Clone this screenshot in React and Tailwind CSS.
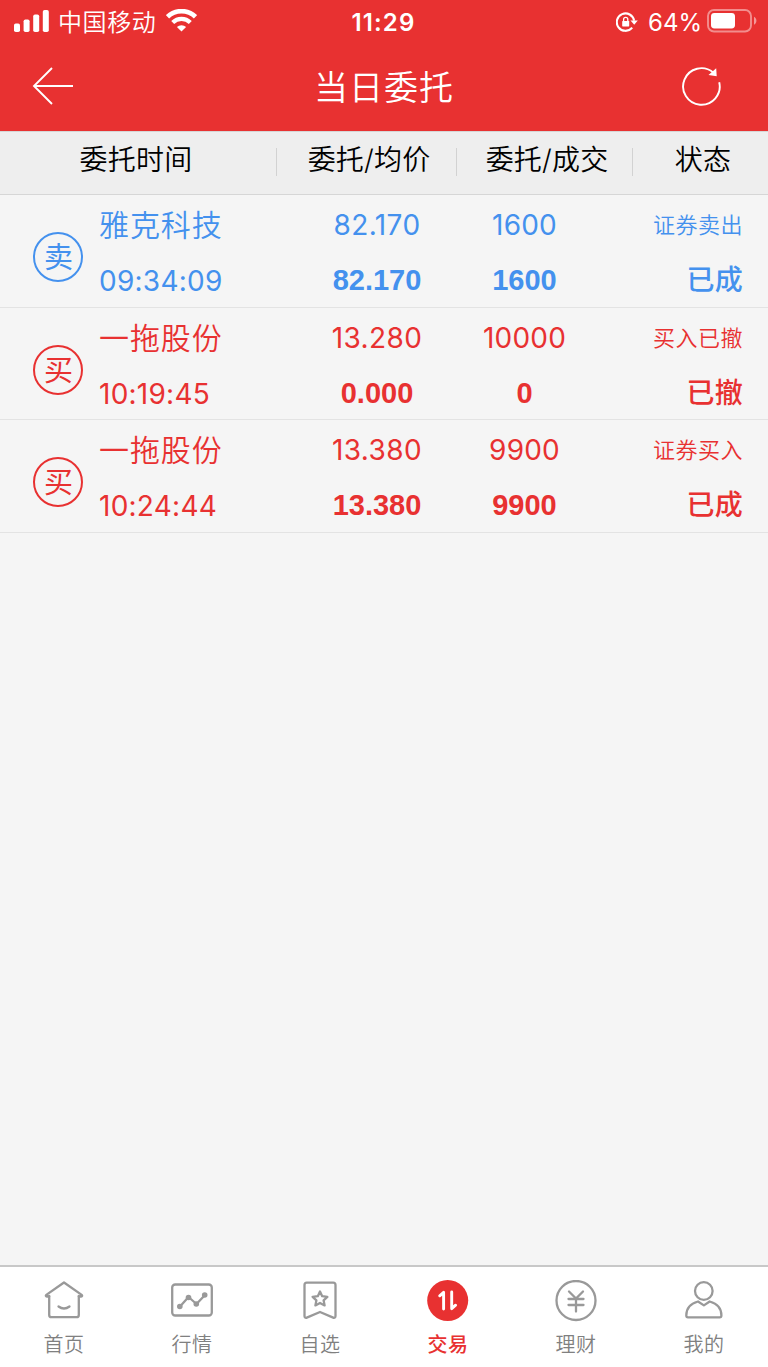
const orders = [
  { side: '卖', name: '雅克科技', time: '09:34:09', price: '82.170', avg: '82.170', qty: '1600', filled: '1600', type: '证券卖出', status: '已成', color: 'text-[#4491ee]', height: 'h-[113px]' },
  { side: '买', name: '一拖股份', time: '10:19:45', price: '13.280', avg: '0.000', qty: '10000', filled: '0', type: '买入已撤', status: '已撤', color: 'text-[#e83131]', height: 'h-[112px]' },
  { side: '买', name: '一拖股份', time: '10:24:44', price: '13.380', avg: '13.380', qty: '9900', filled: '9900', type: '证券买入', status: '已成', color: 'text-[#e83131]', height: 'h-[113px]' },
];

function StatusBar() {
  return (
    <div className="flex h-[43px] items-center justify-between pl-[14px] pr-[11px]">
      <div className="flex w-[240px] items-center">
        <svg width="35" height="22" viewBox="0 0 35 22" fill="#fff" className="-mt-[1px]">
          <rect x="0" y="13.5" width="6" height="8.5" rx="1.8" />
          <rect x="9.6" y="9.5" width="6" height="12.5" rx="1.8" />
          <rect x="19.2" y="4.5" width="6" height="17.5" rx="1.8" />
          <rect x="28.8" y="0" width="6" height="22" rx="1.8" />
        </svg>
        <span className="ml-[9px] mt-[2px] text-[24px] leading-[30px] font-[350] tracking-[0.6px]">中国移动</span>
        <svg width="31" height="23" viewBox="0 0 31 23" className="ml-[10px] -mt-[2px]" fill="none" stroke="#fff">
          <path d="M1.5 7.8a20 20 0 0 1 28 0" strokeWidth="4.6" />
          <path d="M6.7 13.5a12.5 12.5 0 0 1 17.6 0" strokeWidth="4.2" />
          <path d="M15.5 22.5l-4.6-4.4a6.5 6.5 0 0 1 9.2 0z" fill="#fff" stroke="none" />
        </svg>
      </div>
      <div className="-ml-[4px] mt-[2px] text-[24px] leading-[30px] font-semibold tracking-[1.1px]">11:29</div>
      <div className="flex w-[240px] items-center justify-end">
        <svg width="22" height="20" viewBox="0 0 22 20" fill="none" stroke="#fff">
          <path d="M16.2 15.7a8.7 8.7 0 1 1 1.9-7" strokeWidth="2.1" />
          <path d="M14.5 8.6h7.3l-3.6 4.2z" fill="#fff" stroke="none" />
          <rect x="6.2" y="9" width="7" height="5.4" rx="0.6" fill="#fff" stroke="none" />
          <path d="M7.6 9.4V7.4a2.1 2.1 0 0 1 4.2 0v2" strokeWidth="1.3" />
        </svg>
        <span className="ml-[10px] mt-[2px] text-[24px] leading-[30px]">64%</span>
        <svg width="50" height="24" viewBox="0 0 50 24" className="ml-[5px] -mt-[2px]">
          <rect x="1" y="1" width="43" height="21.5" rx="6" fill="none" stroke="#fff" strokeOpacity="0.45" strokeWidth="1.9" />
          <rect x="4" y="4" width="24" height="15.4" rx="3.4" fill="#fff" />
          <path d="M47 7.800c3.200 1.400 3.200 6.600 0 8z" fill="#fff" fillOpacity="0.5" />
        </svg>
      </div>
    </div>
  );
}

function TitleBar() {
  return (
    <div className="flex h-[88px] items-center justify-between pl-[32px] pr-[46px]">
      <svg width="42" height="38" viewBox="0 0 42 38" fill="none" stroke="#fff" strokeWidth="1.9" className="-mt-[2px]">
        <path d="M20 1L2 19l18 18M2 19h39" />
      </svg>
      <h1 className="ml-[14px] mt-[2px] text-[34px] leading-[44px] font-[350] tracking-[1px]">当日委托</h1>
      <svg width="42" height="42" viewBox="0 0 42 42" fill="none" stroke="#fff" className="-mt-[2px]">
        <path d="M39.200 17.200A18.300 18.300 0 1 1 33.200 7.500" strokeWidth="1.9" />
        <path d="M36.200 3.300l0.500 8-8.200-1.200z" fill="#fff" stroke="none" />
      </svg>
    </div>
  );
}

function HeaderCell({ className, last, children }) {
  return (
    <div className={`flex h-[28px] items-center justify-center ${last ? '' : 'border-r border-[#d2d2d2]'} ${className}`}>
      <span className="-mt-[4px] text-[28px] leading-[36px] font-[350] tracking-[0.2px] whitespace-nowrap">{children}</span>
    </div>
  );
}

function OrderRow({ o }) {
  return (
    <div className={`flex border-b border-[#e3e3e3] ${o.height} ${o.color}`}>
      <div className="flex w-[295px] pl-[33px]">
        <div className="mt-[37px] flex size-[50px] shrink-0 items-center justify-center rounded-full border-2 border-current text-[29px] leading-[30px]">
          <span className="mt-[1px] ml-[1px]">{o.side}</span>
        </div>
        <div className="ml-[16px] flex flex-col">
          <span className="mt-[10px] text-[30px] leading-[40px] font-[350] tracking-[0.9px]">{o.name}</span>
          <span className="mt-[16px] text-[28px] leading-[40px] tracking-[0.25px]">{o.time}</span>
        </div>
      </div>
      <div className="flex w-[164px] flex-col items-center">
        <span className="mt-[10px] text-[28px] leading-[40px] tracking-[0.4px]">{o.price}</span>
        <span className="mt-[15px] font-['Liberation_Sans'] text-[29px] leading-[40px] font-bold">{o.avg}</span>
      </div>
      <div className="flex w-[131px] flex-col items-center">
        <span className="mt-[10px] text-[28px] leading-[40px] tracking-[0.2px]">{o.qty}</span>
        <span className="mt-[15px] font-['Liberation_Sans'] text-[29px] leading-[40px] font-bold">{o.filled}</span>
      </div>
      <div className="flex flex-1 flex-col items-end pr-[25px]">
        <span className="mt-[10px] text-[22px] leading-[40px] font-[350] tracking-[0.5px]">{o.type}</span>
        <span className="mt-[15px] text-[28px] leading-[40px] font-medium tracking-[0.3px]">{o.status}</span>
      </div>
    </div>
  );
}

const icons = {
  home: (
    <g>
      <path d="M6.2 16.5H3.800c-1 0-1.300-1-.5-1.600L21 2.500l17.700 12.400c.8.600.5 1.600-.5 1.600h-2.400" />
      <path d="M6.200 16v19c0 1.300.9 2.200 2.200 2.200h25.200c1.300 0 2.200-.9 2.200-2.200V16" />
      <path d="M15.500 26.500q5.500 4 11 0" />
    </g>
  ),
  market: (
    <g>
      <rect x="1.200" y="4.500" width="39.600" height="31" rx="3" />
      <path d="M9 26.500l8.500-9.500 8 7L34 15" />
      <g fill="currentColor" stroke="none">
        <circle cx="8.800" cy="26.500" r="2.800" />
        <circle cx="17.500" cy="17.500" r="2.800" />
        <circle cx="25.300" cy="24" r="2.800" />
        <circle cx="33.700" cy="15" r="2.800" />
      </g>
    </g>
  ),
  favorite: (
    <g>
      <path d="M5.500 5c0-1.500.8-2.400 2.300-2.400h26.400c1.500 0 2.300.9 2.300 2.400v31c0 1.500-1 2.200-2.300 1.600L21 32 7.800 37.600c-1.300.6-2.300-.1-2.300-1.600z" />
      <path d="M21 11.500l2.200 4.700 5.200.6-3.800 3.500 1 5.100L21 22.900l-4.600 2.500 1-5.100-3.800-3.500 5.200-.6z" />
    </g>
  ),
  trade: (
    <g>
      <circle cx="20.700" cy="20.500" r="20.500" fill="#e83131" stroke="none" />
      <path d="M12.700 15.800l3.900-3.500v16.700M24.700 12v16.700l3.900-3.500" stroke="#fff" strokeWidth="2.900" strokeLinecap="round" strokeLinejoin="round" />
    </g>
  ),
  wealth: (
    <g>
      <circle cx="21" cy="20.500" r="19.500" />
      <path d="M14 11.500l7 7 7-7M13.500 19h15M13.500 25h15M21 18.500v13" />
    </g>
  ),
  me: (
    <g>
      <circle cx="20.800" cy="11" r="8.800" />
      <path d="M15 21.500C7.500 23.500 3.300 28.800 3.300 35.500c0 1.300.5 1.900 1.700 1.900h31.700c1.200 0 1.700-.6 1.700-1.900 0-6.700-4.200-12-11.700-14l-5.800 3.900z" />
    </g>
  ),
};

const tabs = [
  { label: '首页', icon: 'home' },
  { label: '行情', icon: 'market' },
  { label: '自选', icon: 'favorite' },
  { label: '交易', icon: 'trade', active: true },
  { label: '理财', icon: 'wealth' },
  { label: '我的', icon: 'me' },
];

export default function App() {
  return (
    <div className="flex h-[1367px] w-[768px] flex-col overflow-hidden bg-[#f5f5f5] font-['Inter','Noto_Sans_CJK_SC',sans-serif]">
      <header className="h-[131px] shrink-0 bg-[#e83131] text-white">
        <StatusBar />
        <TitleBar />
      </header>
      <div className="flex h-[64px] shrink-0 border-t border-b border-t-[#d6d6d6] border-b-[#d6d6d6] bg-[#eeeeee] pt-[16px] text-black">
        <HeaderCell className="w-[277px] pr-[4px]">委托时间</HeaderCell>
        <HeaderCell className="w-[180px] pl-[5px]">委托/均价</HeaderCell>
        <HeaderCell className="w-[176px] pl-[5px]">委托/成交</HeaderCell>
        <HeaderCell className="w-[135px] pl-[5px]" last>状态</HeaderCell>
      </div>
      <main className="flex-1">
        {orders.map((o) => <OrderRow key={o.time} o={o} />)}
      </main>
      <nav className="flex h-[102px] shrink-0 border-t-2 border-[#c8c8c8] bg-white">
        {tabs.map((t) => (
          <div key={t.label} className={`flex flex-1 flex-col items-center pt-[13px] ${t.active ? 'font-medium text-[#e83131]' : 'font-[350] text-[#999999]'}`}>
            <svg width="42" height="42" viewBox="0 0 42 42" fill="none" stroke="currentColor" strokeWidth="2.300" strokeLinecap="round" strokeLinejoin="round">
              {icons[t.icon]}
            </svg>
            <span className={`mt-[9px] text-[20px] leading-[28px] tracking-[0.4px] ${t.active ? '' : 'text-[#808080]'}`}>{t.label}</span>
          </div>
        ))}
      </nav>
    </div>
  );
}
